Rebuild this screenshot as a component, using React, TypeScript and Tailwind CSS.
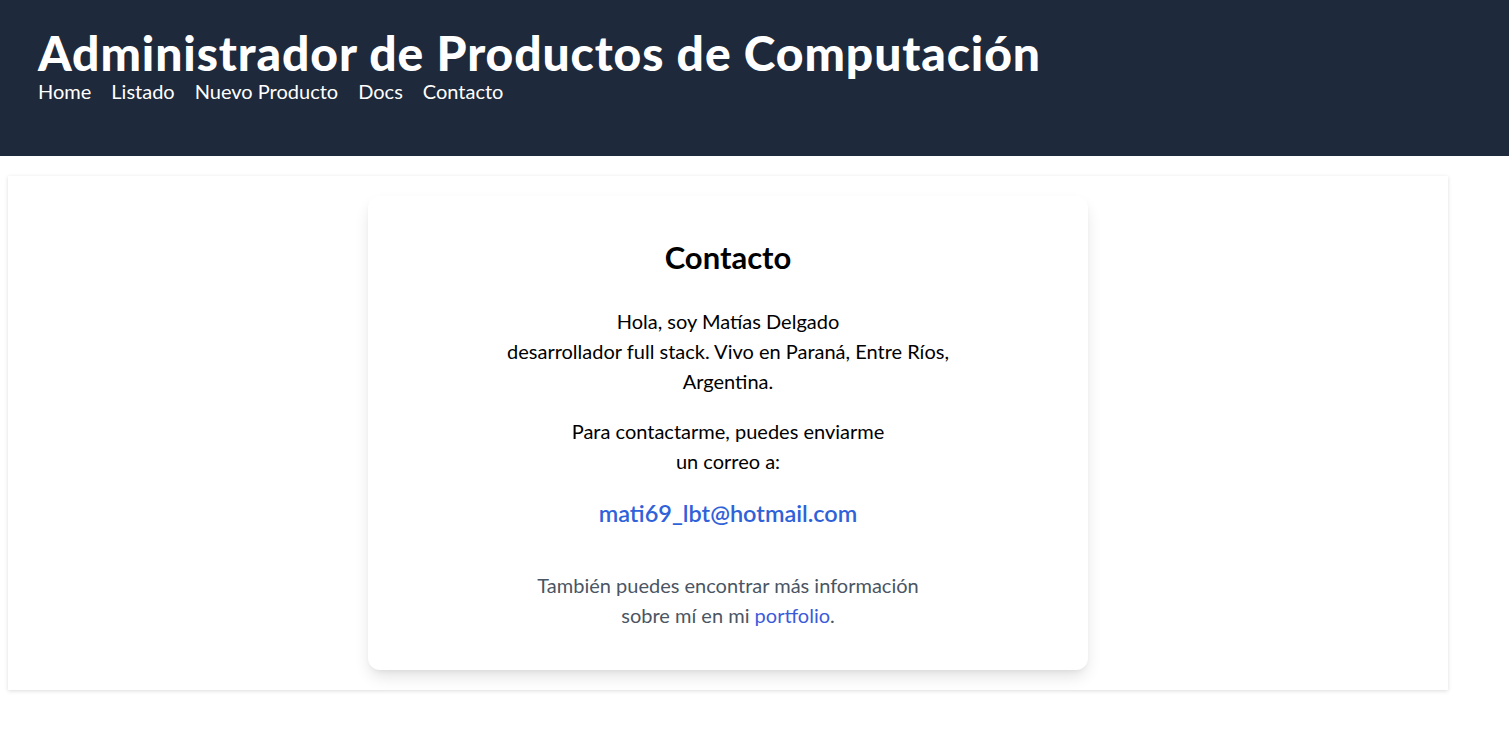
const LINKS = ['Home', 'Listado', 'Nuevo Producto', 'Docs', 'Contacto'];

export default function App() {
  return (
    <div className="min-h-screen bg-white font-['Lato','Noto_Sans',sans-serif] text-black">
      <header className="h-[156px] bg-[#1e293b] px-[38px] pt-[29px] text-white">
        <h1 className="text-5xl leading-none font-black tracking-[0.9px]">Administrador de Productos de Computación</h1>
        <nav className="flex gap-5 text-xl">
          {LINKS.map((l) => (
            <a key={l} href="#" className="leading-7">
              {l}
            </a>
          ))}
        </nav>
      </header>

      <main className="mx-2 mt-5 w-[1440px] bg-white p-5 shadow-[0_1px_4px_rgba(0,0,0,0.14)]">
        <section className="mx-auto w-[720px] rounded-xl bg-white px-10 pt-[43px] pb-[40px] text-center shadow-[0_8px_16px_-2px_rgba(0,0,0,0.12),0_3px_6px_-3px_rgba(0,0,0,0.08)]">
          <h2 className="text-[31px] leading-9 font-bold">Contacto</h2>

          <div className="mx-auto mt-[31px] max-w-md space-y-5 text-xl leading-[30px]">
            <p>
              Hola, soy Matías Delgado
              <br />
              desarrollador full stack. Vivo en Paraná, Entre Ríos, Argentina.
            </p>
            <p>
              Para contactarme, puedes enviarme
              <br />
              un correo a:
            </p>
          </div>

          <a href="#" className="mt-[23px] inline-block text-[23.5px] leading-7 font-semibold text-[#2f62d9]">
            mati69_lbt@hotmail.com
          </a>

          <p className="mt-[42px] text-xl leading-[30px] text-[#4b5563]">
            También puedes encontrar más información
            <br />
            sobre mí en mi{' '}
            <a href="#" className="text-[#3b5bdb]">
              portfolio
            </a>
            .
          </p>
        </section>
      </main>
    </div>
  );
}
